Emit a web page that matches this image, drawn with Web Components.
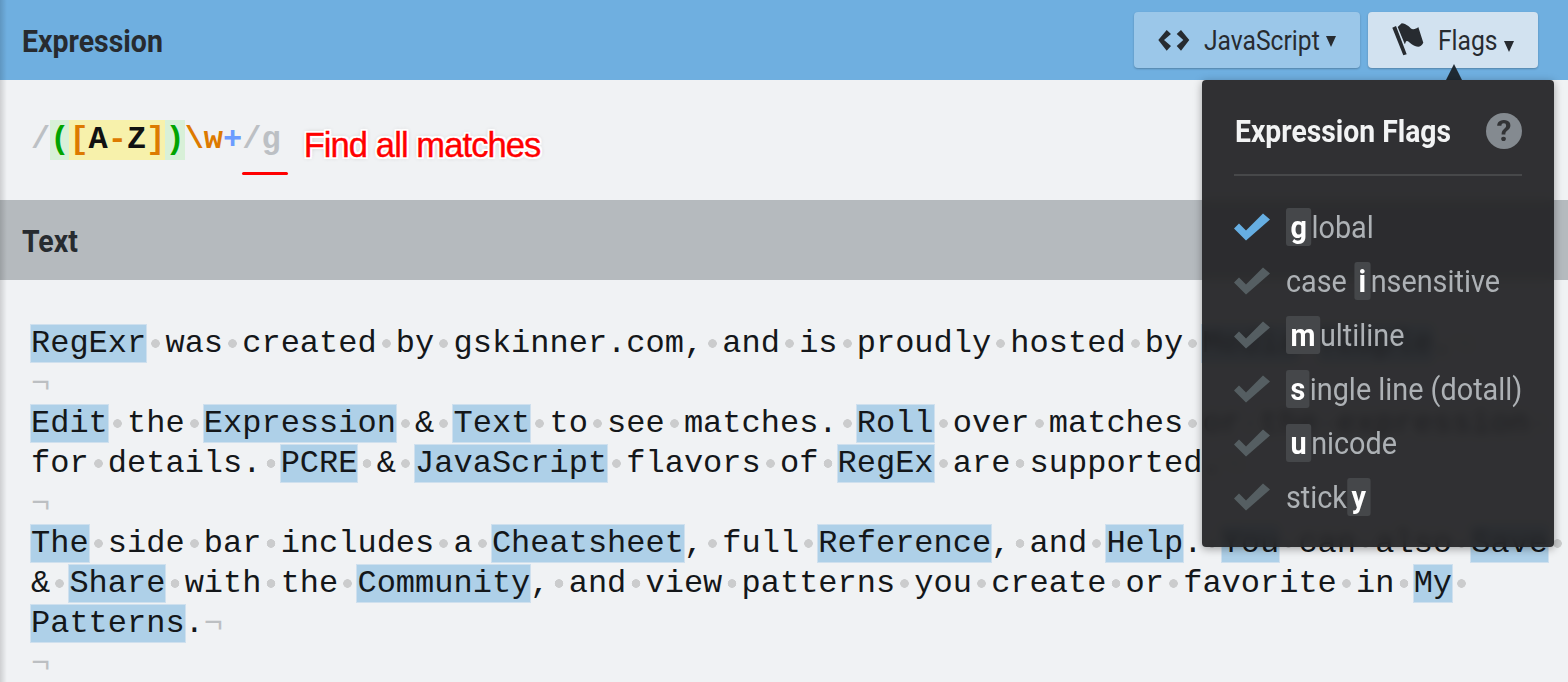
<!DOCTYPE html>
<html>
<head>
<meta charset="utf-8">
<style>
  html, body { margin: 0; height: 100%; overflow: hidden; background: #f0f2f4; }
</style>
</head>
<body>
<regex-app></regex-app>

<template id="panel-head-tpl">
  <style>
    :host { display: flex; align-items: center; height: 80px; padding: 0 30px 0 22px; box-sizing: border-box; background: var(--head-bg, #b5babe); color: #272b30; }
    h2 { margin: 2px 0 0; font: 700 32px/1 Roboto, sans-serif; transform: scaleX(.89); transform-origin: 0 50%; flex: 1; }
    .tools { display: flex; gap: 8px; }
  </style>
  <h2><slot></slot></h2>
  <div class="tools"><slot name="tools"></slot></div>
</template>

<template id="head-btn-tpl">
  <style>
    :host { display: flex; align-items: center; height: 56px; padding: 0 24px; box-sizing: border-box; border-radius: 4px; background: #9bc7e9; color: #272b30; box-shadow: 0 1px 2px rgba(0,0,0,.25); position: relative; }
    :host([open]) { background: #d2e2f0; }
    .label { font: 400 28px/1 Roboto, sans-serif; display: inline-block; margin-top: 2px; transform: scaleX(.88); transform-origin: 0 50%; white-space: nowrap; width: var(--label-w); }
    ::slotted(svg) { flex: none; margin-right: 14px; }
    .caret { width: 0; height: 0; border: 5px solid transparent; border-top: 11px solid #272b30; border-bottom: 0; margin-top: var(--caret-y, 2px); }
    :host([open])::after { content: ""; position: absolute; left: 78px; top: 52px; border: 8px solid transparent; border-top: 0; border-bottom: 16px solid #1f2a33; }
  </style>
  <slot name="icon"></slot>
  <span class="label"><slot></slot></span>
  <span class="caret"></span>
</template>

<template id="expr-view-tpl">
  <style>
    :host { display: flex; align-items: center; height: 120px; padding-left: 31px; box-sizing: border-box; position: relative; }
    .re { font: 700 32px/40px "Liberation Mono", monospace; white-space: pre; }
    .grp { background: #d8f0d8; display: inline-block; height: 40px; }
    .set { background: #f7f1ab; display: inline-block; height: 40px; }
    .sl { color: #bcc0c4; }
    .gr { color: #00a400; }
    .or { color: #dd7a00; }
    .bl { color: #6b9cff; }
    .k { color: #111; }
    .note { margin: 10px 0 0 23px; font: 400 34.5px/1 "Liberation Sans", sans-serif; color: #f00; letter-spacing: -.9px; -webkit-text-stroke: .4px #f00;
      text-shadow: 2px 0 0 #fff, -2px 0 0 #fff, 0 2px 0 #fff, 0 -2px 0 #fff, 2px 2px 1px #fff, -2px 2px 1px #fff, 2px -2px 1px #fff, -2px -2px 1px #fff, 0 0 5px #999; }
    .mark { position: absolute; left: 242px; top: 92px; width: 46px; height: 3px; border-radius: 2px; background: #f00; }
  </style>
  <span class="re"><span class="sl">/</span><span class="grp"><span class="gr">(</span><span class="set"><span class="or">[</span><span class="k">A</span><span class="or">-</span><span class="k">Z</span><span class="or">]</span></span><span class="gr">)</span></span><span class="or">\w</span><span class="bl">+</span><span class="sl">/g</span></span>
  <span class="note">Find all matches</span>
  <span class="mark"></span>
</template>

<template id="flag-row-tpl">
  <style>
    :host { display: flex; align-items: center; height: 54px; color: #adb1b5; font: 400 32px/38px Roboto, sans-serif; }
    svg { flex: none; width: 36px; height: 28px; margin-right: 16px; fill: #555e62; }
    :host([on]) svg { fill: #66aee2; }
    .t { display: inline-block; transform: scaleX(.9); transform-origin: 0 50%; white-space: nowrap; }
    ::slotted(b) { display: inline-block; padding: 0 5px; font-weight: 700; color: #fff; background: #45474a; border-radius: 3px; }
  </style>
  <svg viewBox="0 0 36 28"><path d="M0 15.500 L5 10.500 L12 17.500 L29 .5 L36 6.500 L12 27.500 Z"/></svg>
  <span class="t"><slot></slot></span>
</template>

<template id="flags-menu-tpl">
  <style>
    :host { position: absolute; left: 1202px; top: 80px; width: 352px; height: 467px; box-sizing: border-box; padding: 0 32px; border-radius: 4px; background: rgba(33,33,35,.93); backdrop-filter: blur(5px); box-shadow: 0 2px 8px rgba(0,0,0,.35); color: #f2f3f4; }
    header { display: flex; align-items: center; justify-content: space-between; box-sizing: border-box; height: 96px; padding-top: 8px; border-bottom: 2px solid #47484a; margin-bottom: 24px; }
    h3 { margin: 0 0 0 1px; font: 700 32px/1 Roboto, sans-serif; transform: scaleX(.885); transform-origin: 0 50%; white-space: nowrap; }
    .help { width: 36px; height: 36px; border-radius: 50%; background: #848a90; color: #323335; font: 700 30px/36px Roboto, sans-serif; text-align: center; }
  </style>
  <header><h3>Expression Flags</h3><span class="help">?</span></header>
  <slot></slot>
</template>

<template id="text-view-tpl">
  <style>
    :host { display: block; padding: 44px 0 0 31px; font: 400 32px/40px "Liberation Mono", monospace; color: #14171a; }
    .line { height: 40px; white-space: pre; }
    .m { background: #aed0e8; box-shadow: 0 0 0 1px #cfe0ee; }
    .s { background: radial-gradient(circle at 50% 50%, #cbcccd 0 4px, transparent 4.6px); }
    .p { color: #bcbfc2; }
  </style>
  <div id="out"></div>
</template>

<script>
function tpl(id) { return document.getElementById(id).content.cloneNode(true); }

class PanelHead extends HTMLElement {
  constructor() { super(); this.attachShadow({mode: 'open'}).appendChild(tpl('panel-head-tpl')); }
}
class HeadBtn extends HTMLElement {
  constructor() { super(); this.attachShadow({mode: 'open'}).appendChild(tpl('head-btn-tpl')); }
}
class ExprView extends HTMLElement {
  constructor() { super(); this.attachShadow({mode: 'open'}).appendChild(tpl('expr-view-tpl')); }
}
class FlagRow extends HTMLElement {
  constructor() { super(); this.attachShadow({mode: 'open'}).appendChild(tpl('flag-row-tpl')); }
}
class FlagsMenu extends HTMLElement {
  constructor() { super(); this.attachShadow({mode: 'open'}).appendChild(tpl('flags-menu-tpl')); }
}

const LINES = [
  'RegExr was created by gskinner.com, and is proudly hosted by Media Temple.¬',
  '¬',
  'Edit the Expression & Text to see matches. Roll over matches or the expression ',
  'for details. PCRE & JavaScript flavors of RegEx are supported.¬',
  '¬',
  'The side bar includes a Cheatsheet, full Reference, and Help. You can also Save ',
  '& Share with the Community, and view patterns you create or favorite in My ',
  'Patterns.¬',
  '¬'
];

class TextView extends HTMLElement {
  constructor() { super(); this.attachShadow({mode: 'open'}).appendChild(tpl('text-view-tpl')); }
  connectedCallback() {
    const out = this.shadowRoot.getElementById('out');
    LINES.forEach(l => {
      const line = document.createElement('div');
      line.className = 'line';
      l.split(/([A-Z]\w+| |¬)/).filter(Boolean).forEach(tok => {
        if (/^[A-Z]\w+$/.test(tok) || tok === ' ' || tok === '¬') {
          const span = document.createElement('span');
          span.className = tok === ' ' ? 's' : tok === '¬' ? 'p' : 'm';
          span.textContent = tok;
          line.appendChild(span);
        } else {
          line.appendChild(document.createTextNode(tok));
        }
      });
      out.appendChild(line);
    });
  }
}

class RegexApp extends HTMLElement {
  constructor() {
    super();
    this.attachShadow({mode: 'open'}).innerHTML = `
      <style>
        :host { display: block; position: relative; width: 1568px; height: 682px; overflow: hidden; background: #f0f2f4; }
        .edge { position: absolute; left: 0; top: 0; bottom: 0; width: 7px; background: linear-gradient(90deg, rgba(0,0,0,.14), rgba(0,0,0,0)); pointer-events: none; }
      </style>
      <panel-head style="--head-bg:#6fafe0">
        Expression
        <head-btn slot="tools" style="--label-w:122px">
          <svg slot="icon" width="32" height="21" viewBox="0 0 32 21" fill="#272b30" style="margin-top:1px"><path d="M.3 10 L8.700 0 L13 4 L6 10 L13 16 L8.700 20.700 Z M18.700 4 L23 0 L31.300 10 L23 20.700 L18.700 16 L25.300 10 Z"/></svg>
          JavaScript
        </head-btn>
        <head-btn slot="tools" open style="--label-w:66px;--caret-y:12px">
          <svg slot="icon" width="32" height="34" viewBox="0 0 32 34" fill="#272b30" style="margin-top:-2px"><path d="M.3 5.700 L4 4 L14.700 32.300 L11.300 33.300 Z M5.700 5 L9.700 1.300 C12 1.500 14 2.500 16.300 4 C18 5.500 19.500 7.500 21.300 7.300 C23 7.200 25 6.300 26.300 5 L31.300 20.700 C30 23.500 28 24.700 26.300 24.700 C24 24.700 22 23.800 19.700 22.300 C18 21 16.500 19 14.700 19 C13.500 19.200 13.500 21.500 12.800 22.300 Z"/></svg>
          Flags
        </head-btn>
      </panel-head>
      <expr-view></expr-view>
      <panel-head>Text</panel-head>
      <text-view></text-view>
      <flags-menu>
        <flag-row on><b>g</b>lobal</flag-row>
        <flag-row>case <b>i</b>nsensitive</flag-row>
        <flag-row><b>m</b>ultiline</flag-row>
        <flag-row><b>s</b>ingle line (dotall)</flag-row>
        <flag-row><b>u</b>nicode</flag-row>
        <flag-row>stick<b>y</b></flag-row>
      </flags-menu>
      <div class="edge"></div>`;
  }
}

customElements.define('panel-head', PanelHead);
customElements.define('head-btn', HeadBtn);
customElements.define('expr-view', ExprView);
customElements.define('flag-row', FlagRow);
customElements.define('flags-menu', FlagsMenu);
customElements.define('text-view', TextView);
customElements.define('regex-app', RegexApp);
</script>
</body>
</html>
